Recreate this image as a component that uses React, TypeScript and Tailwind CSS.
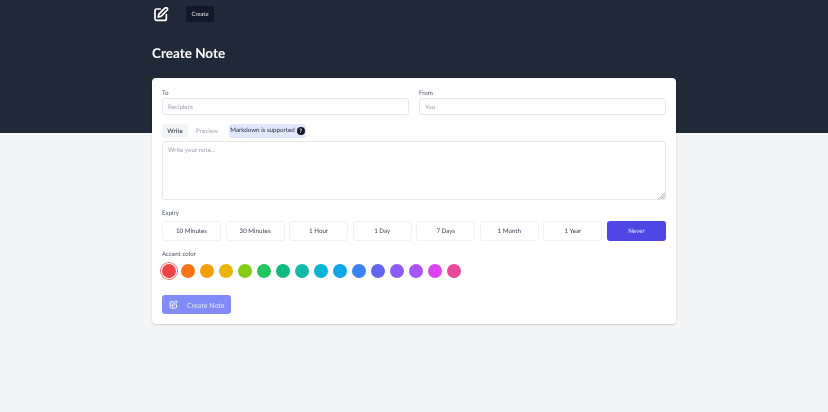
import React from "react";

const expiry = ["10 Minutes", "30 Minutes", "1 Hour", "1 Day", "7 Days", "1 Month", "1 Year", "Never"];
const colors = [
  "bg-[#ef4444]", "bg-[#f97316]", "bg-[#f59e0b]", "bg-[#eab308]", "bg-[#84cc16]", "bg-[#22c55e]", "bg-[#10b981]", "bg-[#14b8a6]",
  "bg-[#06b6d4]", "bg-[#0ea5e9]", "bg-[#3b82f6]", "bg-[#6366f1]", "bg-[#8b5cf6]", "bg-[#a855f7]", "bg-[#d946ef]", "bg-[#ec4899]",
];

function EditIcon({ className }: { className: string }) {
  return (
    <svg viewBox="0 0 24 24" fill="none" stroke="currentColor" strokeWidth="2.6" strokeLinecap="round" strokeLinejoin="round" className={className}>
      <path d="M11 4.5H5.5A2.5 2.5 0 0 0 3 7v12a2.5 2.5 0 0 0 2.5 2.5h12A2.5 2.5 0 0 0 20 19v-6" />
      <path d="M18.2 2.8a2.3 2.3 0 0 1 3.2 3.2L12 15.5l-4.2 1 1-4.2z" />
    </svg>
  );
}

export default function App() {
  return (
    <div className="min-h-[412px] bg-[#f3f4f6] font-['Lato',sans-serif] text-[#374151] [text-rendering:geometricPrecision] whitespace-nowrap will-change-transform">
      <header className="h-[133px] bg-[#1f2937]">
        <div className="mx-auto w-[524px]">
          <nav className="flex h-[28px] items-center">
            <EditIcon className="ml-[1px] h-[16px] w-[16px] text-white" />
            <span className="ml-[17px] flex h-[16px] w-[28px] items-center justify-center rounded-[2px] bg-[#111827] pt-[2px] text-[5.8px] text-[#e5e7eb]">Create</span>
          </nav>
          <h1 className="mt-[16px] text-[13.5px] leading-[18px] font-bold text-white">Create Note</h1>
        </div>
      </header>
      <main className="mx-auto -mt-[55px] w-[524px] rounded-[4px] bg-white px-[10px] pt-[11px] pb-[10px] shadow-[0_1px_2px_rgba(0,0,0,0.15)]">
        <div className="grid grid-cols-2 gap-[10px]">
          {[["To", "Recipient"], ["From", "You"]].map(([label, ph]) => (
            <div key={label}>
              <div className="text-[6.2px] leading-[9px] text-[#4b5563]">{label}</div>
              <div className="flex h-[17px] items-center rounded-[3px] border border-[#e5e7eb] px-[5px] pt-[2px] text-[6.2px] text-[#9ca3af]">{ph}</div>
            </div>
          ))}
        </div>
        <div className="mt-[9px] flex h-[14px] items-center text-[6.2px]">
          <span className="flex h-full w-[26px] items-center justify-center rounded-[3px] bg-[#f3f4f6] pt-[1px] text-[#1f2937]">Write</span>
          <span className="ml-[5px] flex h-full w-[28px] items-center justify-center pt-[1px] text-[#9ca3af]">Preview</span>
          <span className="ml-[8px] flex h-full w-[77px] items-center justify-center gap-[2px] rounded-[3px] bg-[#e0e7ff] text-[#1f2937]">
            Markdown is supported
            <span className="flex h-[8px] w-[8px] shrink-0 items-center justify-center rounded-full bg-[#111827] text-[6px] font-bold text-white">?</span>
          </span>
        </div>
        <div className="relative mt-[3px] h-[59px] rounded-[3px] border border-[#e5e7eb] px-[5px] pt-[4px] text-[6.2px] leading-[9px] text-[#9ca3af]">
          Write your note...
          <svg viewBox="0 0 6 6" className="absolute right-[0px] bottom-[0px] h-[7px] w-[7px] text-[#9ca3af]">
            <path d="M6 0.5L0.5 6M6 2.5L2.5 6M6 4.5L4.5 6" stroke="currentColor" strokeWidth="0.8" fill="none" />
          </svg>
        </div>
        <div className="mt-[9px] text-[6.2px] leading-[9px] text-[#4b5563]">Expiry</div>
        <div className="mt-[3px] flex justify-between">
          {expiry.map((e) => (
            <div
              key={e}
              className={
                e === "Never"
                  ? "flex h-[20px] w-[59px] items-center justify-center rounded-[3px] bg-[#4f46e5] pt-[1px] text-[6.2px] text-[#e0e7ff]"
                  : "flex h-[20px] w-[59px] items-center justify-center rounded-[3px] border border-[#f0f1f3] pt-[1px] text-[6.2px] text-[#374151]"
              }
            >
              {e}
            </div>
          ))}
        </div>
        <div className="mt-[9px] text-[6.2px] leading-[9px] text-[#4b5563]">Accent color</div>
        <div className="mt-[5px] flex gap-[5px]">
          {colors.map((c, i) => (
            <span
              key={c}
              className={
                i === 0
                  ? `h-[14px] w-[14px] rounded-full ${c} ring-1 ring-[#f87171] ring-offset-1 ring-offset-white`
                  : `h-[14px] w-[14px] rounded-full ${c}`
              }
            />
          ))}
        </div>
        <div className="mt-[17px] flex h-[19px] w-[69px] items-center rounded-[3px] bg-[#818cf8] pl-[7px] text-[7px] text-[#e0e7ff]">
          <EditIcon className="h-[9px] w-[9px] text-white" />
          <span className="mt-[3px] ml-[9px]">Create Note</span>
        </div>
      </main>
    </div>
  );
}
